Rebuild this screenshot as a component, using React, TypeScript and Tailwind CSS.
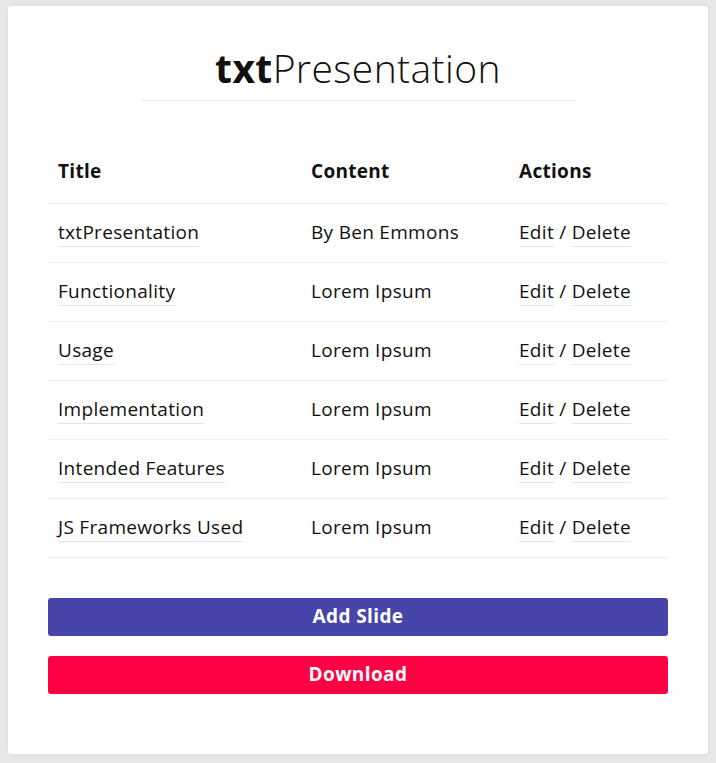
const rows = [
  { title: "txtPresentation", content: "By Ben Emmons" },
  { title: "Functionality", content: "Lorem Ipsum" },
  { title: "Usage", content: "Lorem Ipsum" },
  { title: "Implementation", content: "Lorem Ipsum" },
  { title: "Intended Features", content: "Lorem Ipsum" },
  { title: "JS Frameworks Used", content: "Lorem Ipsum" },
];

const link = "border-b border-[#e4e4e4] pb-[1px] text-[#111]";

export default function App() {
  return (
    <div className="min-h-screen bg-[#e8e8e8] px-2 pt-[6px] pb-[10px] font-['Open_Sans',sans-serif] text-[#111]">
      <div className="rounded-[3px] bg-white px-10 pt-10 pb-[60px] shadow-[0_0_4px_rgba(0,0,0,0.08)]">
        <h1 className="text-center text-[39px] leading-[44px] tracking-[0.4px] text-[#111]">
          <span className="font-bold">txt</span>
          <span className="font-light">Presentation</span>
        </h1>
        <div className="mx-auto mt-[10px] h-px w-[70%] bg-[#e4e4e4]" />

        <table className="mt-[43px] w-full border-collapse text-left text-[19px] tracking-[0.3px]">
          <thead>
            <tr className="border-b border-[#eeeeee]">
              <th className="h-[59px] px-[10px] pb-[4px] font-bold">Title</th>
              <th className="h-[59px] px-[10px] pb-[4px] font-bold">Content</th>
              <th className="h-[59px] px-[10px] pb-[4px] font-bold">Actions</th>
            </tr>
          </thead>
          <tbody>
            {rows.map((r) => (
              <tr key={r.title} className="border-b border-[#eeeeee]">
                <td className="h-[59px] w-[253px] px-[10px]">
                  <a className={link}>{r.title}</a>
                </td>
                <td className="h-[59px] w-[208px] px-[10px]">{r.content}</td>
                <td className="h-[59px] px-[10px]">
                  <a className={link}>Edit</a> / <a className={link}>Delete</a>
                </td>
              </tr>
            ))}
          </tbody>
        </table>

        <div className="mt-10 flex flex-col gap-5">
          <button className="h-[38px] w-full rounded-[3px] bg-[#4745aa] text-[19px] font-bold tracking-[0.4px] text-white">
            Add Slide
          </button>
          <button className="h-[38px] w-full rounded-[3px] bg-[#ff0044] text-[19px] font-bold tracking-[0.4px] text-white">
            Download
          </button>
        </div>
      </div>
    </div>
  );
}
